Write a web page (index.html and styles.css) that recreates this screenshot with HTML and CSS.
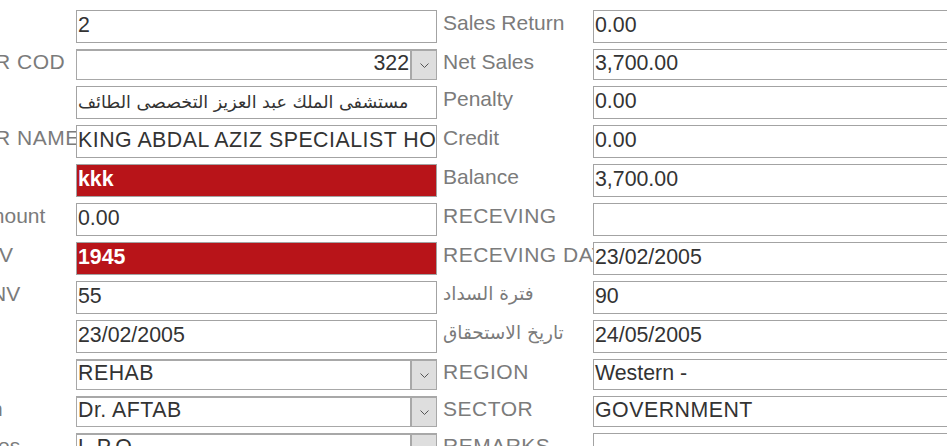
FILE: index.html
```html
<!DOCTYPE html>
<html lang="en">
<head>
  <meta charset="UTF-8">
  <title>Invoice Details</title>
  <link rel="stylesheet" href="styles.css">
</head>
<body>
  <div class="form">
    <!-- row 1 -->
    <div class="label-l"></div>
    <div class="field">2</div>
    <div class="label">Sales Return</div>
    <div class="field wide">0.00</div>

    <!-- row 2 -->
    <div class="label-l"><span class="cut-r caps">R COD</span></div>
    <div class="field combo">
      <span class="combo-value num">322</span>
      <span class="combo-btn"><svg width="9" height="5" viewBox="0 0 9 5"><polyline points="0.5,0.5 4.5,4.5 8.5,0.5" fill="none" stroke="#555" stroke-width="1"/></svg></span>
    </div>
    <div class="label">Net Sales</div>
    <div class="field wide slim">3,700.00</div>

    <!-- row 3 -->
    <div class="label-l"></div>
    <div class="field arabic" dir="rtl">مستشفى الملك عبد العزيز التخصصى الطائف</div>
    <div class="label">Penalty</div>
    <div class="field wide">0.00</div>

    <!-- row 4 -->
    <div class="label-l"><span class="cut-r caps">R NAME</span></div>
    <div class="field caps">KING ABDAL AZIZ SPECIALIST HOSPITAL</div>
    <div class="label">Credit</div>
    <div class="field wide">0.00</div>

    <!-- row 5 -->
    <div class="label-l"></div>
    <div class="field alert">kkk</div>
    <div class="label">Balance</div>
    <div class="field wide">3,700.00</div>

    <!-- row 6 -->
    <div class="label-l"><span class="cut-m">mount</span></div>
    <div class="field">0.00</div>
    <div class="label caps">RECEVING</div>
    <div class="field wide"></div>

    <!-- row 7 -->
    <div class="label-l"><span class="cut-v">V</span></div>
    <div class="field alert">1945</div>
    <div class="label caps">RECEVING DATE</div>
    <div class="field wide">23/02/2005</div>

    <!-- row 8 -->
    <div class="label-l"><span class="cut-nv">NV</span></div>
    <div class="field">55</div>
    <div class="label arabic-label">فترة السداد</div>
    <div class="field wide">90</div>

    <!-- row 9 -->
    <div class="label-l"></div>
    <div class="field">23/02/2005</div>
    <div class="label arabic-label">تاريخ الاستحقاق</div>
    <div class="field wide">24/05/2005</div>

    <!-- row 10 -->
    <div class="label-l"></div>
    <div class="field combo">
      <span class="combo-value caps">REHAB</span>
      <span class="combo-btn"><svg width="9" height="5" viewBox="0 0 9 5"><polyline points="0.5,0.5 4.5,4.5 8.5,0.5" fill="none" stroke="#555" stroke-width="1"/></svg></span>
    </div>
    <div class="label caps">REGION</div>
    <div class="field wide slim">Western -</div>

    <!-- row 11 -->
    <div class="label-l"><span class="cut-n">n</span></div>
    <div class="field combo">
      <span class="combo-value caps">Dr. AFTAB</span>
      <span class="combo-btn"><svg width="9" height="5" viewBox="0 0 9 5"><polyline points="0.5,0.5 4.5,4.5 8.5,0.5" fill="none" stroke="#555" stroke-width="1"/></svg></span>
    </div>
    <div class="label caps">SECTOR</div>
    <div class="field wide slim caps">GOVERNMENT</div>

    <!-- row 12 -->
    <div class="label-l"><span class="cut-es">es</span></div>
    <div class="field combo">
      <span class="combo-value caps">L.P.O</span>
      <span class="combo-btn"><svg width="9" height="5" viewBox="0 0 9 5"><polyline points="0.5,0.5 4.5,4.5 8.5,0.5" fill="none" stroke="#555" stroke-width="1"/></svg></span>
    </div>
    <div class="label caps">REMARKS</div>
    <div class="field wide"></div>
  </div>
</body>
</html>
```

FILE: styles.css
```css
body {
  margin: 0;
  background: #fff;
  font-family: "Liberation Sans", Arial, sans-serif;
  overflow: hidden;
}
.form {
  display: grid;
  grid-template-columns: 76px 361px 156px 400px;
  grid-template-rows: 33px 31px 33px 33px 33px 33px 33px 33px 33px 31px 31px 33px;
  row-gap: 6px;
  padding-top: 10px;
  width: 993px;
}
.caps {
  letter-spacing: 0.5px;
}
.label-l {
  overflow: hidden;
  white-space: nowrap;
  font-size: 21px;
  line-height: 24px;
  padding-top: 1px;
  color: #7b7b7b;
}
.label-l span {
  display: inline-block;
}
.cut-r {
  margin-left: -5px;
}
.cut-m {
  margin-left: -13px;
}
.cut-v {
  margin-left: -1px;
}
.cut-nv {
  margin-left: -9px;
}
.cut-n {
  margin-left: -9px;
}
.cut-es {
  margin-left: -2px;
}
.label {
  overflow: hidden;
  white-space: nowrap;
  font-size: 21px;
  line-height: 24px;
  padding: 1px 0 0 6px;
  color: #7b7b7b;
}
.arabic-label {
  font-family: "DejaVu Sans", sans-serif;
  font-size: 18.5px;
  padding-top: 1px;
}
.field {
  box-sizing: border-box;
  border: 1px solid #a3a3a3;
  padding: 2px 1px 0;
  font-size: 21.33px;
  line-height: 24px;
  color: #333;
  white-space: nowrap;
  overflow: hidden;
}
.field.slim {
  padding-top: 1px;
}
.field.wide {
  border-right: none;
}
.field.alert {
  background: #b81419;
  color: #fff;
  font-weight: bold;
}
.field.arabic {
  font-family: "DejaVu Sans", sans-serif;
  font-size: 17.5px;
  text-align: left;
  padding-top: 3px;
}
.combo {
  display: flex;
  padding: 0;
  border-width: 2px 1px 1px 1px;
  border-color: #a8a8a8;
}
.combo-value {
  flex: 1;
  padding: 0 1px;
  line-height: 24px;
}
.combo-value.num {
  text-align: right;
}
.combo-btn {
  width: 26px;
  box-sizing: border-box;
  background: #dedede;
  border-left: 2px solid #a8a8a8;
  display: flex;
  align-items: center;
  justify-content: center;
}
```
